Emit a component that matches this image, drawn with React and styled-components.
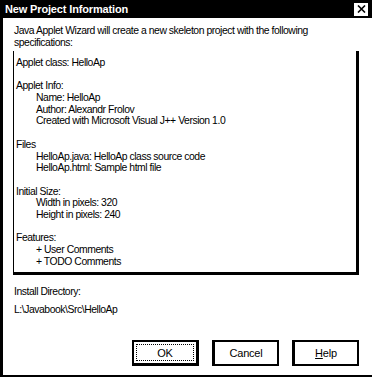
import React from 'react'
import styled, { createGlobalStyle } from 'styled-components'

const Global = createGlobalStyle`
  html, body {
    margin: 0;
    padding: 0;
    background: #fff;
  }
  body {
    font-family: "Liberation Sans", Arial, sans-serif;
    font-size: 10.4px;
    letter-spacing: -0.45px;
    color: #000;
  }
`

const Dialog = styled.div`
  width: 372px;
  height: 377px;
  box-sizing: border-box;
  border-left: 3px solid #000;
  border-bottom: 2px solid #000;
  display: flex;
  flex-direction: column;
  background: #fff;
`

const TitleBar = styled.div`
  height: 18px;
  background: #000;
  color: #fff;
  display: flex;
  align-items: center;
  justify-content: space-between;
  padding: 0 4px 0 2px;
  font-weight: bold;
  font-size: 11px;
  letter-spacing: -0.15px;
`

const CloseBtn = styled.button`
  width: 14px;
  height: 13px;
  padding: 0;
  border: none;
  background: #fff;
  display: flex;
  align-items: center;
  justify-content: center;
`

const Body = styled.div`
  flex: 1;
  display: flex;
  flex-direction: column;
  padding: 7px 13px 9px 10px;
`

const Intro = styled.p`
  margin: 0 0 2px 1px;
  line-height: 12px;
`

const SpecBox = styled.div`
  height: 224px;
  box-sizing: border-box;
  border-left: 1px solid #000;
  border-right: 3px solid #000;
  border-bottom: 3px solid #000;
  padding: 6px 0 0 2px;
`

const Line = styled.div`
  line-height: 11.7px;
  height: 11.7px;
  padding-left: ${p => (p.indent ? '20px' : '0')};
  white-space: nowrap;
`

const Label = styled.div`
  margin: ${p => p.top || '0'} 0 0 1px;
  line-height: 12px;
`

const Buttons = styled.div`
  margin-top: auto;
  display: flex;
  justify-content: flex-end;
  gap: 13px;
`

const Button = styled.button`
  width: 67px;
  height: 26px;
  box-sizing: border-box;
  background: #fff;
  font: inherit;
  font-size: 11px;
  letter-spacing: -0.2px;
  color: #000;
  border: 1px solid #000;
  border-width: ${p => (p.primary ? '2px 3px 3px 2px' : '2px 2px 2px 3px')};
  padding: 0;
  display: flex;
  align-items: center;
  justify-content: center;
  position: relative;
`

const Focus = styled.span`
  position: absolute;
  inset: 2px;
  border: 1px dotted #000;
`

const specs = [
  ['Applet class: HelloAp'],
  [''],
  ['Applet Info:'],
  ['Name: HelloAp', 1],
  ['Author: Alexandr Frolov', 1],
  ['Created with Microsoft Visual J++ Version 1.0', 1],
  [''],
  ['Files'],
  ['HelloAp.java: HelloAp class source code', 1],
  ['HelloAp.html: Sample html file', 1],
  [''],
  ['Initial Size:'],
  ['Width in pixels: 320', 1],
  ['Height in pixels: 240', 1],
  [''],
  ['Features:'],
  ['+ User Comments', 1],
  ['+ TODO Comments', 1],
]

export default function App() {
  return (
    <>
      <Global />
      <Dialog>
        <TitleBar>
          <span>New Project Information</span>
          <CloseBtn aria-label="Close">
            <svg width="9" height="8" viewBox="0 0 9 8">
              <path d="M1 0.5 L8 7.5 M8 0.5 L1 7.5" stroke="#000" strokeWidth="1.6" />
            </svg>
          </CloseBtn>
        </TitleBar>
        <Body>
          <Intro>
            Java Applet Wizard will create a new skeleton project with the following specifications:
          </Intro>
          <SpecBox>
            {specs.map(([text, indent], i) => (
              <Line key={i} indent={indent}>{text}</Line>
            ))}
          </SpecBox>
          <Label top="11px">Install Directory:</Label>
          <Label top="6px">L:\Javabook\Src\HelloAp</Label>
          <Buttons>
            <Button primary><Focus />OK</Button>
            <Button>Cancel</Button>
            <Button><span><u>H</u>elp</span></Button>
          </Buttons>
        </Body>
      </Dialog>
    </>
  )
}
